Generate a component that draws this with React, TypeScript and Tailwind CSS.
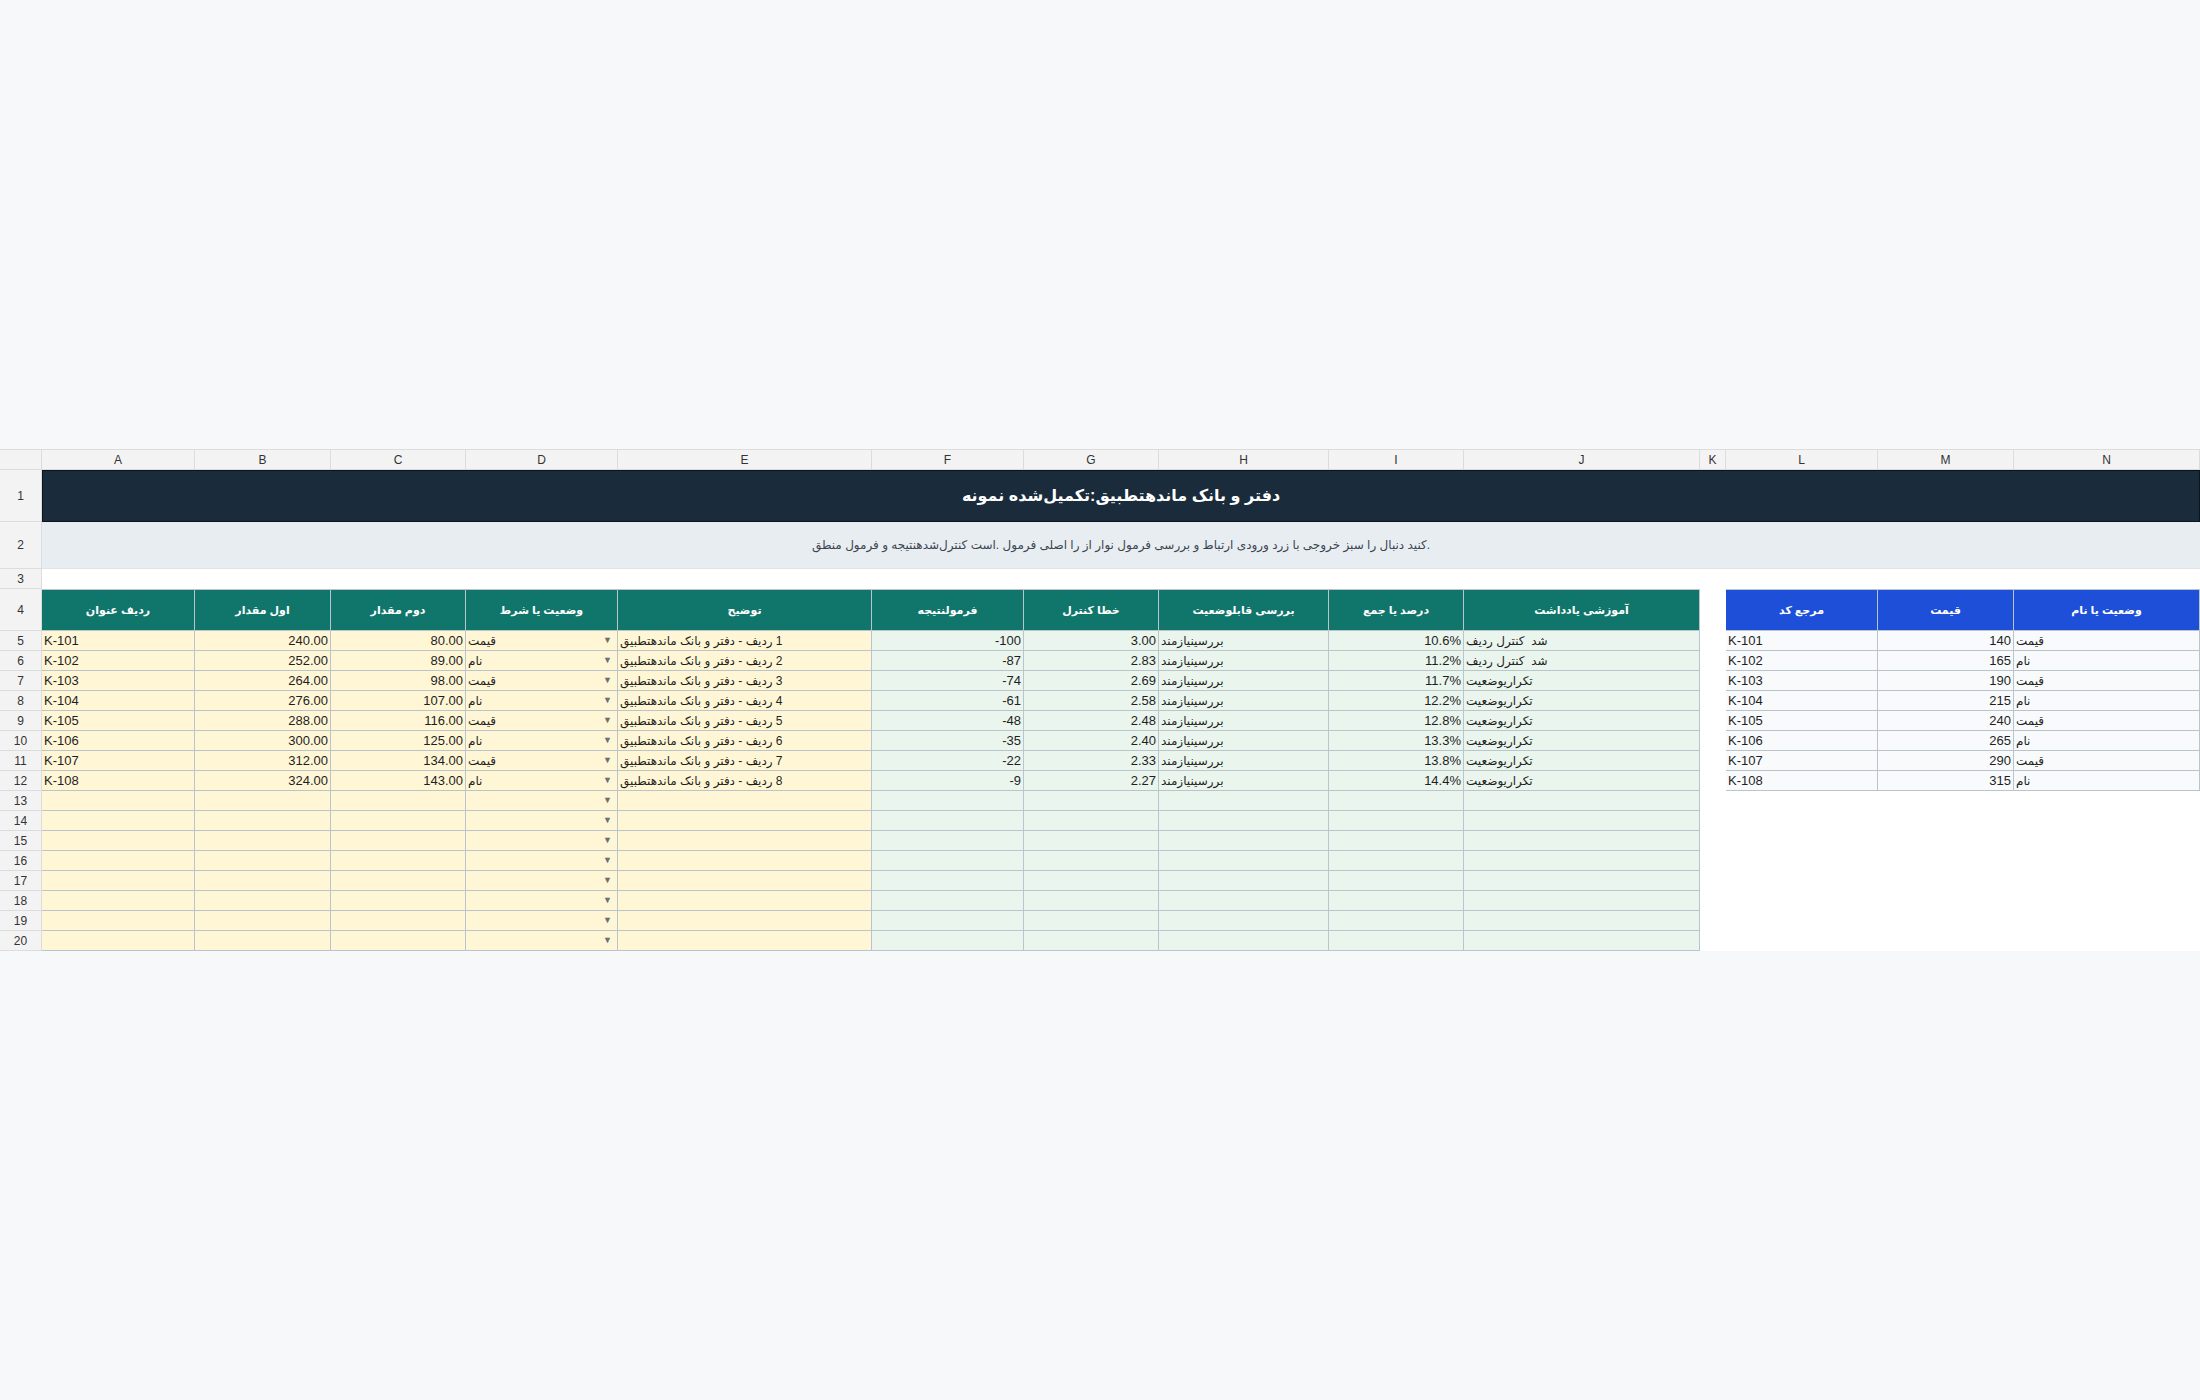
import React from "react";

const COLS = ["A", "B", "C", "D", "E", "F", "G", "H", "I", "J", "K", "L", "M", "N"];

const DATA = [
  ["K-101", "240.00", "80.00", "قیمت", "1", "-100", "3.00", "10.6%", "شد  کنترل ردیف"],
  ["K-102", "252.00", "89.00", "نام", "2", "-87", "2.83", "11.2%", "شد  کنترل ردیف"],
  ["K-103", "264.00", "98.00", "قیمت", "3", "-74", "2.69", "11.7%", "تکراریوضعیت"],
  ["K-104", "276.00", "107.00", "نام", "4", "-61", "2.58", "12.2%", "تکراریوضعیت"],
  ["K-105", "288.00", "116.00", "قیمت", "5", "-48", "2.48", "12.8%", "تکراریوضعیت"],
  ["K-106", "300.00", "125.00", "نام", "6", "-35", "2.40", "13.3%", "تکراریوضعیت"],
  ["K-107", "312.00", "134.00", "قیمت", "7", "-22", "2.33", "13.8%", "تکراریوضعیت"],
  ["K-108", "324.00", "143.00", "نام", "8", "-9", "2.27", "14.4%", "تکراریوضعیت"],
];

const REF = [
  ["K-101", "140", "قیمت"],
  ["K-102", "165", "نام"],
  ["K-103", "190", "قیمت"],
  ["K-104", "215", "نام"],
  ["K-105", "240", "قیمت"],
  ["K-106", "265", "نام"],
  ["K-107", "290", "قیمت"],
  ["K-108", "315", "نام"],
];

const TEAL_HEADERS = [
  "ردیف عنوان",
  "اول مقدار",
  "دوم مقدار",
  "وضعیت یا شرط",
  "توضیح",
  "فرمولنتیجه",
  "خطا کنترل",
  "بررسی قابلوضعیت",
  "درصد یا جمع",
  "آموزشی یادداشت",
];

const BLUE_HEADERS = ["مرجع کد", "قیمت", "وضعیت یا نام"];

function Fa({ children, className = "" }: { children?: React.ReactNode; className?: string }) {
  return (
    <span dir="rtl" className={`text-[12px] ${className}`}>
      {children}
    </span>
  );
}

function RowHead({ n, h }: { n: number; h: string }) {
  return (
    <div
      className={`${h} flex items-center justify-center bg-[#f3f3f3] border-r border-b border-[#dcdcdc] text-[12px] text-[#333]`}
    >
      {n}
    </div>
  );
}

function Y({ children, right }: { children?: React.ReactNode; right?: boolean }) {
  return (
    <div
      className={`h-[20px] flex items-center bg-[#fff6d6] border-r border-b border-[#b9c4cb] px-[2px] text-[13px] text-[#1f1f1f] whitespace-pre overflow-hidden ${
        right ? "justify-end" : "justify-start"
      }`}
    >
      {children}
    </div>
  );
}

function G({ children, right }: { children?: React.ReactNode; right?: boolean }) {
  return (
    <div
      className={`h-[20px] flex items-center bg-[#e9f5ed] border-r border-b border-[#b9c4cb] px-[2px] text-[13px] text-[#1f1f1f] whitespace-pre overflow-hidden ${
        right ? "justify-end" : "justify-start"
      }`}
    >
      {children}
    </div>
  );
}

function R({ children, right }: { children?: React.ReactNode; right?: boolean }) {
  return (
    <div
      className={`h-[20px] flex items-center bg-[#f8fafc] border-r border-b border-[#b9c4cb] px-[2px] text-[13px] text-[#1f1f1f] whitespace-pre overflow-hidden ${
        right ? "justify-end" : "justify-start"
      }`}
    >
      {children}
    </div>
  );
}

function DropCell({ text }: { text?: string }) {
  return (
    <div className="h-[20px] flex items-center justify-between bg-[#fff6d6] border-r border-b border-[#b9c4cb] pl-[2px] pr-[5px] text-[13px] text-[#1f1f1f] whitespace-nowrap overflow-hidden">
      <Fa>{text ?? ""}</Fa>
      <span className="text-[9px] text-[#6b6f73]">▼</span>
    </div>
  );
}

export default function App() {
  return (
    <div
      className="min-h-screen h-[1400px] w-[2200px] bg-[#f6f8f9] flex items-center"
      style={{ fontFamily: '"Liberation Sans", "DejaVu Sans", sans-serif' }}
    >
      <div className="w-[2200px] grid grid-cols-[42px_153px_136px_135px_152px_254px_152px_135px_170px_135px_236px_26px_152px_136px_186px] bg-white">
        {/* column header row */}
        <div className="h-[21px] bg-[#f3f3f3] border-r border-b border-t border-[#dcdcdc]" />
        {COLS.map((c) => (
          <div
            key={c}
            className="h-[21px] flex items-center justify-center bg-[#f3f3f3] border-r border-b border-t border-[#dcdcdc] text-[12px] text-[#333]"
          >
            {c}
          </div>
        ))}

        {/* row 1 title */}
        <RowHead n={1} h="h-[52px]" />
        <div className="col-span-14 h-[52px] flex items-center justify-center bg-[#1a2b3b] border border-[#0b131b] text-white font-bold">
          <span dir="rtl" className="text-[16px]">
            دفتر و بانک ماندهتطبیق:تکمیل‌شده نمونه
          </span>
        </div>

        {/* row 2 subtitle */}
        <RowHead n={2} h="h-[47px]" />
        <div className="col-span-14 h-[47px] flex items-center justify-center bg-[#e8edf2] border-b border-[#dfe4e8] text-[#3b4550]">
          <span dir="rtl" className="text-[12px]">
            .کنید دنبال را سبز خروجی با زرد ورودی ارتباط و بررسی فرمول نوار از را اصلی فرمول .است کنترل‌شدهنتیجه و فرمول منطق
          </span>
        </div>

        {/* row 3 */}
        <RowHead n={3} h="h-[20px]" />
        <div className="col-span-14 h-[20px] bg-white" />

        {/* row 4 headers */}
        <RowHead n={4} h="h-[42px]" />
        {TEAL_HEADERS.map((t, i) => (
          <div
            key={i}
            className="h-[42px] flex items-center justify-center bg-[#10756b] border-r border-b border-t border-[#b9c4cb] text-white font-bold whitespace-nowrap"
          >
            <span dir="rtl" className="text-[11px]">
              {t}
            </span>
          </div>
        ))}
        <div className="h-[42px] bg-white" />
        {BLUE_HEADERS.map((t, i) => (
          <div
            key={i}
            className="h-[42px] flex items-center justify-center bg-[#1d4fd8] border-r border-b border-t border-[#b9c4cb] text-white font-bold whitespace-nowrap"
          >
            <span dir="rtl" className="text-[11px]">
              {t}
            </span>
          </div>
        ))}

        {/* data rows 5-12 */}
        {DATA.map((d, i) => (
          <React.Fragment key={i}>
            <RowHead n={i + 5} h="h-[20px]" />
            <Y>{d[0]}</Y>
            <Y right>{d[1]}</Y>
            <Y right>{d[2]}</Y>
            <DropCell text={d[3]} />
            <Y>
              <Fa>{`${d[4]} ردیف - دفتر و بانک ماندهتطبیق`}</Fa>
            </Y>
            <G right>{d[5]}</G>
            <G right>{d[6]}</G>
            <G>
              <Fa>بررسینیازمند</Fa>
            </G>
            <G right>{d[7]}</G>
            <G>
              <Fa>{d[8]}</Fa>
            </G>
            <div className="h-[20px] bg-white" />
            <R>{REF[i][0]}</R>
            <R right>{REF[i][1]}</R>
            <R>
              <Fa>{REF[i][2]}</Fa>
            </R>
          </React.Fragment>
        ))}

        {/* empty rows 13-20 */}
        {Array.from({ length: 8 }).map((_, i) => (
          <React.Fragment key={`e${i}`}>
            <RowHead n={i + 13} h="h-[20px]" />
            <Y />
            <Y />
            <Y />
            <DropCell />
            <Y />
            <G />
            <G />
            <G />
            <G />
            <G />
            <div className="col-span-4 h-[20px] bg-white" />
          </React.Fragment>
        ))}
      </div>
    </div>
  );
}
